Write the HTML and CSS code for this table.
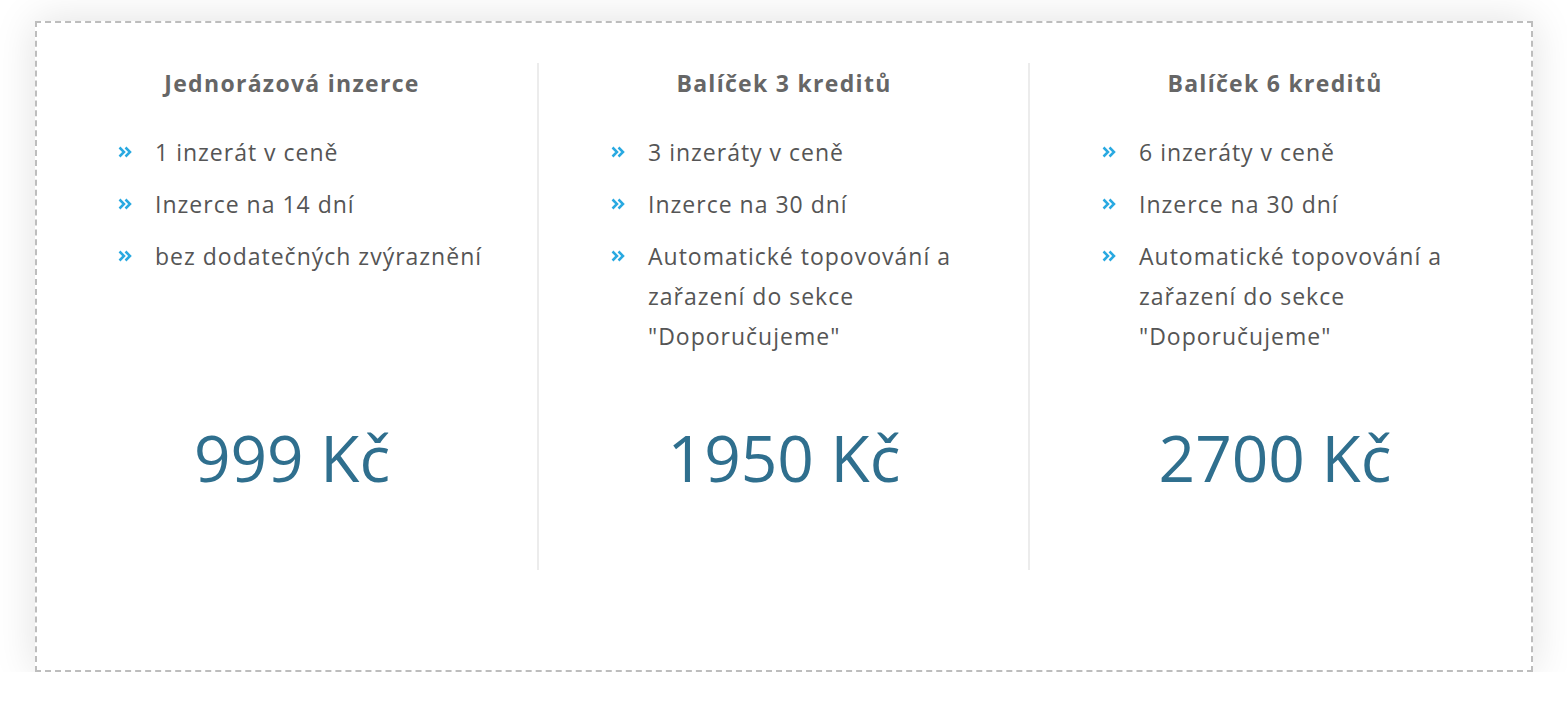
FILE: index.html
```html
<!DOCTYPE html>
<html lang="cs">
<head>
<meta charset="utf-8">
<title>Ceník inzerce</title>
<link rel="stylesheet" href="styles.css">
</head>
<body>
<div class="page">
  <div class="pricing">
    <div class="plan">
      <h3 class="plan-title">Jednorázová inzerce</h3>
      <ul class="features">
        <li><svg class="chev" viewBox="0 0 14 12"><path d="M1.5 1.5 L6 6 L1.5 10.5 M7.5 1.5 L12 6 L7.5 10.5"/></svg><span>1 inzerát v ceně</span></li>
        <li><svg class="chev" viewBox="0 0 14 12"><path d="M1.5 1.5 L6 6 L1.5 10.5 M7.5 1.5 L12 6 L7.5 10.5"/></svg><span>Inzerce na 14 dní</span></li>
        <li><svg class="chev" viewBox="0 0 14 12"><path d="M1.5 1.5 L6 6 L1.5 10.5 M7.5 1.5 L12 6 L7.5 10.5"/></svg><span>bez dodatečných zvýraznění</span></li>
      </ul>
      <div class="price">999 Kč</div>
    </div>
    <div class="plan">
      <h3 class="plan-title">Balíček 3 kreditů</h3>
      <ul class="features">
        <li><svg class="chev" viewBox="0 0 14 12"><path d="M1.5 1.5 L6 6 L1.5 10.5 M7.5 1.5 L12 6 L7.5 10.5"/></svg><span>3 inzeráty v ceně</span></li>
        <li><svg class="chev" viewBox="0 0 14 12"><path d="M1.5 1.5 L6 6 L1.5 10.5 M7.5 1.5 L12 6 L7.5 10.5"/></svg><span>Inzerce na 30 dní</span></li>
        <li><svg class="chev" viewBox="0 0 14 12"><path d="M1.5 1.5 L6 6 L1.5 10.5 M7.5 1.5 L12 6 L7.5 10.5"/></svg><span>Automatické topovování a zařazení do sekce "Doporučujeme"</span></li>
      </ul>
      <div class="price">1950 Kč</div>
    </div>
    <div class="plan">
      <h3 class="plan-title">Balíček 6 kreditů</h3>
      <ul class="features">
        <li><svg class="chev" viewBox="0 0 14 12"><path d="M1.5 1.5 L6 6 L1.5 10.5 M7.5 1.5 L12 6 L7.5 10.5"/></svg><span>6 inzeráty v ceně</span></li>
        <li><svg class="chev" viewBox="0 0 14 12"><path d="M1.5 1.5 L6 6 L1.5 10.5 M7.5 1.5 L12 6 L7.5 10.5"/></svg><span>Inzerce na 30 dní</span></li>
        <li><svg class="chev" viewBox="0 0 14 12"><path d="M1.5 1.5 L6 6 L1.5 10.5 M7.5 1.5 L12 6 L7.5 10.5"/></svg><span>Automatické topovování a zařazení do sekce "Doporučujeme"</span></li>
      </ul>
      <div class="price">2700 Kč</div>
    </div>
  </div>
</div>
</body>
</html>
```

FILE: styles.css
```css
* { box-sizing: border-box; }
html, body { margin: 0; padding: 0; background: #fff; }
body {
  font-family: "Open Sans", Lato, sans-serif;
  color: #555;
}
.page {
  padding: 21px 34px 0 35px;
}
.pricing {
  display: flex;
  background: #fff;
  border: 2px dashed #bdbdbd;
  box-shadow: 0 0 40px rgba(0, 0, 0, 0.12);
  padding: 40px 9px 100px;
  height: 651px;
}
.plan {
  flex: 0 0 492px;
  height: 507px;
  display: flex;
  flex-direction: column;
}
.plan + .plan {
  border-left: 2px solid #ececec;
  margin-left: -1px;
}
.plan-title {
  margin: 0;
  text-align: center;
  font-size: 23px;
  line-height: 40px;
  font-weight: 700;
  letter-spacing: 1.3px;
  color: #666;
}
.features {
  list-style: none;
  margin: 29px 0 0;
  padding: 0 20px 0 72px;
  height: 224px;
}
.features li {
  display: flex;
  align-items: flex-start;
  font-size: 23px;
  line-height: 40px;
  letter-spacing: 1px;
  margin-bottom: 12px;
}
.chev {
  flex: 0 0 14px;
  width: 14px;
  height: 12px;
  margin-top: 14px;
  margin-right: 23px;
  fill: none;
  stroke: #29a9e1;
  stroke-width: 2.5;
}
.price {
  margin-top: 62px;
  text-align: center;
  font-size: 64px;
  line-height: 80px;
  color: #2f6f8e;
}
```
